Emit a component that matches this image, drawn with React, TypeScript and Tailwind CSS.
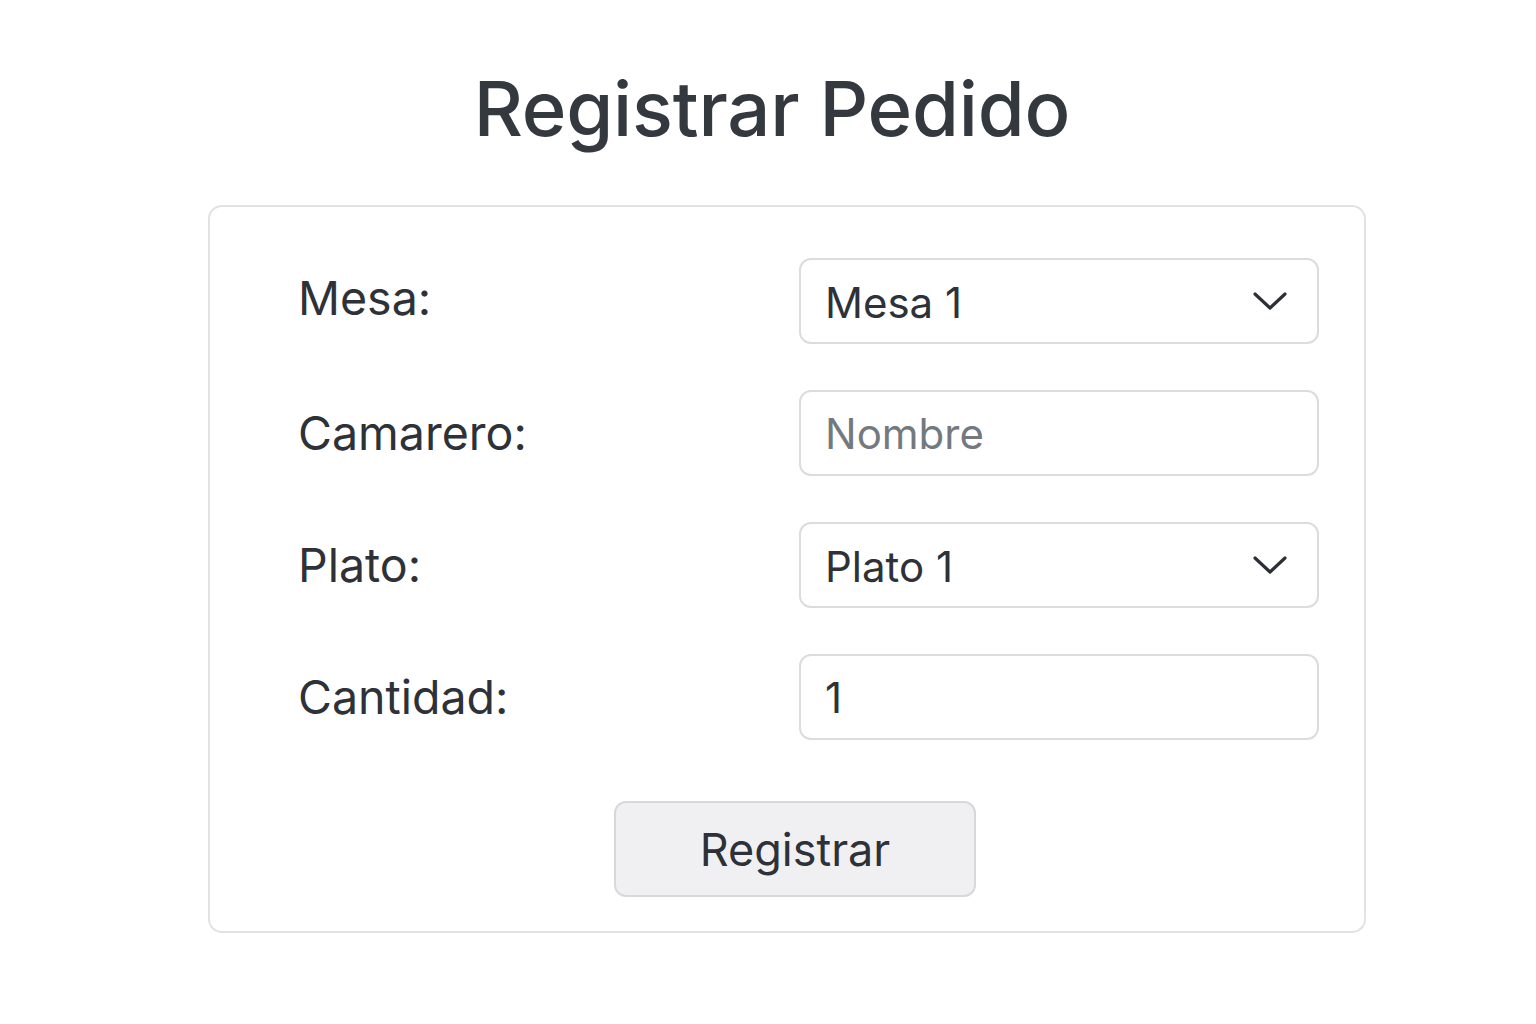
import React, { useState } from 'react';

const Chevron = () => (
  <svg width="34" height="20" viewBox="0 0 34 20" fill="none" className="shrink-0">
    <path d="M2 3 L17 17 L32 3" stroke="#2c3036" strokeWidth="3.2" strokeLinecap="round" strokeLinejoin="round" />
  </svg>
);

const App: React.FC = () => {
  const [mesa, setMesa] = useState('Mesa 1');
  const [camarero, setCamarero] = useState('');
  const [plato, setPlato] = useState('Plato 1');
  const [cantidad, setCantidad] = useState('1');

  const fieldBox = 'h-[86px] w-[520px] rounded-[12px] border-2 border-[#dcdcdf] bg-white flex items-center pl-[24px] pr-[30px]';

  return (
    <div className="min-h-[1024px] w-full bg-white text-[#2e3238]" style={{ fontFamily: 'Inter, "Noto Sans", sans-serif' }}>
      <h1 className="pt-[58px] pl-2 text-center text-[76px] leading-[100px] font-medium tracking-[-0.2px] text-[#343940]">
        Registrar Pedido
      </h1>

      {/* Form card */}
      <div className="ml-[208px] mt-[47px] w-[1158px] rounded-[14px] border-2 border-[#e2e2e4] pt-[51px] pb-[34px] pl-[88px]">
        <div className="flex flex-col gap-[46px]">
          <div className="flex items-center">
            <label className="w-[501px] text-[46.5px] leading-none pb-[6px]">Mesa:</label>
            <div className={`${fieldBox} justify-between`}>
              <span className="text-[42px] leading-none pt-[4px]">{mesa}</span>
              <Chevron />
            </div>
          </div>

          <div className="flex items-center">
            <label className="w-[501px] text-[46.5px] leading-none">Camarero:</label>
            <div className={fieldBox}>
              <input
                value={camarero}
                onChange={(e) => setCamarero(e.target.value)}
                placeholder="Nombre"
                className="w-full bg-transparent text-[42px] leading-none outline-none placeholder:text-[#747980]"
              />
            </div>
          </div>

          <div className="flex items-center">
            <label className="w-[501px] text-[46.5px] leading-none">Plato:</label>
            <div className={`${fieldBox} justify-between`}>
              <span className="text-[42px] leading-none pt-[4px]">{plato}</span>
              <Chevron />
            </div>
          </div>

          <div className="flex items-center">
            <label className="w-[501px] text-[46.5px] leading-none">Cantidad:</label>
            <div className={fieldBox}>
              <input
                value={cantidad}
                onChange={(e) => setCantidad(e.target.value)}
                className="w-full bg-transparent text-[42px] leading-none outline-none"
              />
            </div>
          </div>
        </div>

        <button
          onClick={() => { setMesa('Mesa 1'); setPlato('Plato 1'); }}
          className="mt-[61px] ml-[316px] h-[96px] w-[362px] rounded-[12px] border-2 border-[#d8d8db] bg-[#f0f0f2] text-[45px] leading-none text-[#2e3238]"
        >
          Registrar
        </button>
      </div>
    </div>
  );
};

export default App;
